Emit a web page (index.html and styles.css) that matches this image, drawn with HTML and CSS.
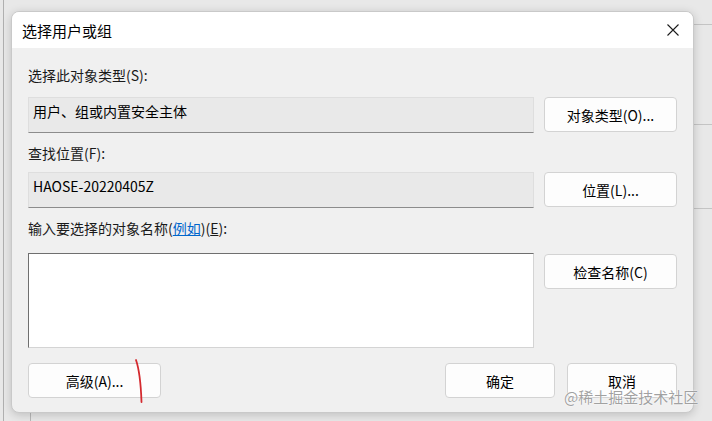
FILE: index.html
```html
<!DOCTYPE html>
<html lang="zh-CN">
<head>
    <meta charset="UTF-8">
    <meta name="viewport" content="width=device-width, initial-scale=1.0">
    <title>选择用户或组</title>
    <link rel="stylesheet" href="styles.css">
</head>
<body>
    <div class="dialog">
        <div class="titleBar">
            <span class="title">选择用户或组</span>
            <svg class="closeIcon" width="12" height="12" viewBox="0 0 12 12">
                <path d="M0.5 0.5 L11.5 11.5 M11.5 0.5 L0.5 11.5" stroke="#1b1b1b" stroke-width="1.1" fill="none"/>
            </svg>
        </div>

        <div class="dialogBody">
            <div class="label label-first">选择此对象类型(S):</div>
            <div class="row">
                <div class="field">用户、组或内置安全主体</div>
                <div class="button">对象类型(O)...</div>
            </div>

            <div class="label label-second">查找位置(F):</div>
            <div class="row row-second">
                <div class="field">HAOSE-20220405Z</div>
                <div class="button">位置(L)...</div>
            </div>

            <div class="label label-third">输入要选择的对象名称(<a class="link">例如</a>)(<u>E</u>):</div>
            <div class="row row-third">
                <div class="nameInput"></div>
                <div class="button button-check">检查名称(C)</div>
            </div>

            <div class="footer">
                <div class="button">高级(A)...</div>
                <div class="footerRight">
                    <div class="button button-small">确定</div>
                    <div class="button button-small">取消</div>
                </div>
            </div>
        </div>

        <!-- hand drawn mark on top of the dialog -->
        <svg class="redMark" width="12" height="46" viewBox="0 0 12 46">
            <path d="M2 1 Q6.5 14 7.5 43" stroke="#d42a2f" stroke-width="1.8" fill="none" stroke-linecap="round"/>
        </svg>
    </div>

    <div class="watermark">@稀土掘金技术社区</div>
</body>
</html>
```

FILE: styles.css
```css
body {
    position: relative;
    margin: 0;
    height: 421px;
    overflow: hidden;
    font-family: "Noto Sans CJK SC", "Noto Sans", sans-serif;
    font-size: 14px;
    color: #1a1a1a;
    background:
        linear-gradient(#c4c4c4, #c4c4c4) 694px 24px / 18px 1px no-repeat,
        linear-gradient(#c4c4c4, #c4c4c4) 694px 124px / 18px 1px no-repeat,
        linear-gradient(#c4c4c4, #c4c4c4) 694px 208px / 18px 1px no-repeat,
        linear-gradient(#b0b0b0, #b0b0b0) 3px 0 / 1px 421px no-repeat,
        linear-gradient(#b8b8b8, #b8b8b8) 30px 413px / 1px 8px no-repeat,
        #e8e8e8;
}

.dialog {
    position: relative;
    box-sizing: border-box;
    width: 683px;
    height: 402px;
    margin: 11px 0 0 11px;
    border: 1px solid #c9c9c9;
    border-radius: 8px;
    background-color: #f0f0f0;
    box-shadow: 0 2px 10px rgba(0, 0, 0, 0.18);
    overflow: hidden;
}

.titleBar {
    display: flex;
    align-items: center;
    justify-content: space-between;
    height: 36px;
    padding: 0 14px 0 10px;
    background-color: #fff;
}

.title {
    font-size: 15px;
    color: #000;
}

.closeIcon {
    display: block;
}

.dialogBody {
    padding: 0 16px;
}

.label {
    height: 20px;
    line-height: 20px;
}

.label-first {
    margin-top: 17px;
    margin-bottom: 12px;
}

.label-second {
    margin-top: 10px;
    margin-bottom: 9px;
}

.label-third {
    margin-top: 10px;
    margin-bottom: 15px;
}

.link {
    color: #0066cc;
    text-decoration: underline;
}

.row {
    display: flex;
    gap: 10px;
    align-items: flex-start;
}

.field {
    box-sizing: border-box;
    width: 506px;
    height: 36px;
    padding: 3px 4px;
    line-height: 20px;
    background-color: #e9e9e9;
    border: 1px solid #dedede;
    border-bottom-color: #8c8c8c;
    color: #000;
}

.nameInput {
    box-sizing: border-box;
    width: 506px;
    height: 95px;
    background-color: #fff;
    border: 1px solid;
    border-color: #6f6f6f #d4d4d4 #d4d4d4 #6f6f6f;
}

.button {
    box-sizing: border-box;
    display: flex;
    align-items: center;
    justify-content: center;
    width: 133px;
    height: 35px;
    background-color: #fdfdfd;
    border: 1px solid #d3d3d3;
    border-radius: 4px;
    color: #000;
}

.button-check {
    margin-top: 1px;
}

.button-small {
    width: 110px;
}

.footer {
    display: flex;
    justify-content: space-between;
    margin-top: 15px;
}

.footerRight {
    display: flex;
    gap: 12px;
}

.redMark {
    position: absolute;
    left: 122px;
    top: 347px;
}

.watermark {
    position: absolute;
    left: 564px;
    top: 387px;
    font-size: 15px;
    line-height: 20px;
    color: rgba(130, 130, 130, 0.75);
    text-shadow: 0 0 1px #fff, 0 0 2px #fff;
    white-space: nowrap;
}
```
